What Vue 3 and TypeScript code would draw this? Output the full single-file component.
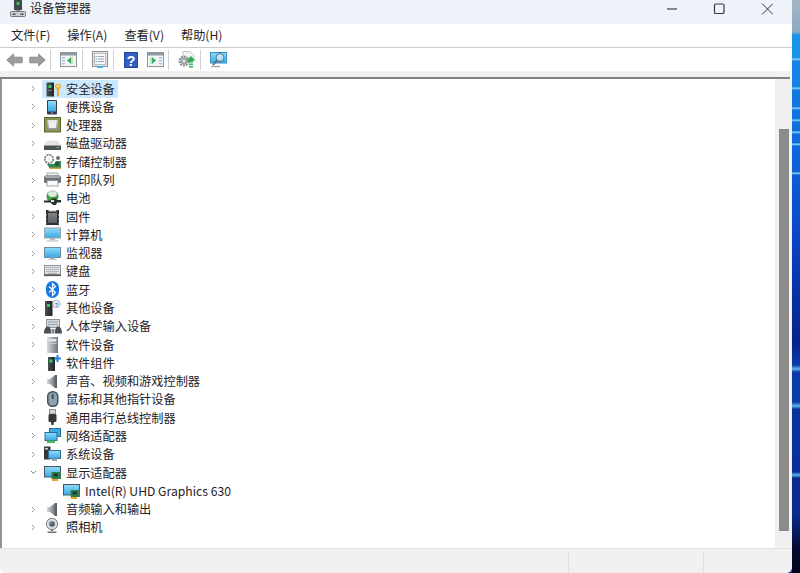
<script setup lang="ts">
type Node = { label: string; icon: string; open?: boolean; selected?: boolean; child?: boolean };
const nodes: Node[] = [
  { label: '安全设备', icon: 'security', selected: true },
  { label: '便携设备', icon: 'portable' },
  { label: '处理器', icon: 'cpu' },
  { label: '磁盘驱动器', icon: 'disk' },
  { label: '存储控制器', icon: 'storage' },
  { label: '打印队列', icon: 'printer' },
  { label: '电池', icon: 'battery' },
  { label: '固件', icon: 'firmware' },
  { label: '计算机', icon: 'computer' },
  { label: '监视器', icon: 'monitor' },
  { label: '键盘', icon: 'keyboard' },
  { label: '蓝牙', icon: 'bluetooth' },
  { label: '其他设备', icon: 'other' },
  { label: '人体学输入设备', icon: 'hid' },
  { label: '软件设备', icon: 'softdev' },
  { label: '软件组件', icon: 'softcomp' },
  { label: '声音、视频和游戏控制器', icon: 'sound' },
  { label: '鼠标和其他指针设备', icon: 'mouse' },
  { label: '通用串行总线控制器', icon: 'usb' },
  { label: '网络适配器', icon: 'network' },
  { label: '系统设备', icon: 'system' },
  { label: '显示适配器', icon: 'display', open: true },
  { label: 'Intel(R) UHD Graphics 630', icon: 'display', child: true },
  { label: '音频输入和输出', icon: 'sound' },
  { label: '照相机', icon: 'camera' },
];
const menus = ['文件(F)', '操作(A)', '查看(V)', '帮助(H)'];
</script>

<template>
  <div class="desktop">
    <svg class="defs" width="0" height="0">
      <defs>
        <linearGradient id="gScreen" x1="0" y1="0" x2="0" y2="1"><stop offset="0" stop-color="#8fdcf8" /><stop offset="1" stop-color="#3aa8e6" /></linearGradient>
        <linearGradient id="gSilver" x1="0" y1="0" x2="0" y2="1"><stop offset="0" stop-color="#e8eaec" /><stop offset="1" stop-color="#8f959a" /></linearGradient>
        <linearGradient id="gTower" x1="0" y1="0" x2="1" y2="0"><stop offset="0" stop-color="#4b5156" /><stop offset="1" stop-color="#1f2427" /></linearGradient>
        <linearGradient id="gSpeaker" x1="0" y1="0" x2="1" y2="0"><stop offset="0" stop-color="#d8dbde" /><stop offset="1" stop-color="#6e7478" /></linearGradient>
      </defs>
    </svg>
    <div class="window">
      <header class="titlebar">
        <svg class="app-icon" width="16" height="17" viewBox="0 0 16 17">
          <rect x="4" y="0" width="8" height="10" fill="#43484c" />
          <rect x="6.500" y="2" width="3" height="3" fill="#35c765" />
          <rect x="5.500" y="10" width="5" height="2" fill="#8d9296" />
          <rect x="0.500" y="11.500" width="15" height="5" rx="1" fill="#c9cdd0" stroke="#777c80" />
          <rect x="2.500" y="13.500" width="3" height="1.500" fill="#4b5054" />
          <rect x="10.500" y="13.500" width="3" height="1.500" fill="#4b5054" />
        </svg>
        <span class="title">设备管理器</span>
        <div class="controls">
          <svg width="12" height="12" viewBox="0 0 12 12"><path d="M2 6h10.500" stroke="#3a3f45" stroke-width="1.200" /></svg>
          <svg width="12" height="12" viewBox="0 0 12 12"><rect x="1.500" y="1" width="9.500" height="9.500" rx="1.300" fill="none" stroke="#33383d" stroke-width="1.200" /></svg>
          <svg width="12" height="12" viewBox="0 0 12 12"><path d="M1 .5l11 11M12 .5l-11 11" stroke="#33383d" stroke-width="1" /></svg>
        </div>
      </header>

      <nav class="menubar">
        <span v-for="m in menus" :key="m" class="menu">{{ m }}</span>
      </nav>

      <div class="toolbar">
        <svg class="tb back" width="17" height="14" viewBox="0 0 17 14"><path d="M.8 7L7.500 1v3.200h8.700v5.600H7.500V13z" fill="#9b9d9f" stroke="#7d7f81" stroke-width=".8" /></svg>
        <svg class="tb fwd" width="17" height="14" viewBox="0 0 17 14"><path d="M16.200 7L9.500 1v3.200H.8v5.600h8.700V13z" fill="#9b9d9f" stroke="#7d7f81" stroke-width=".8" /></svg>
        <i class="sep s1"></i>
        <svg class="tb panel-a" width="17" height="15" viewBox="0 0 17 15"><rect x=".5" y=".5" width="16" height="14" fill="#f4f5f6" stroke="#8e959b" /><rect x="1" y="1" width="15" height="2.500" fill="#8f9aa3" /><rect x="2" y="5" width="3" height="1.500" fill="#a9c3d6" /><rect x="2" y="8" width="3" height="1.500" fill="#a9c3d6" /><rect x="2" y="11" width="3" height="1.500" fill="#a9c3d6" /><path d="M11 5v7l-4-3.500z" fill="#37ad5e" /><rect x="11" y="5" width="2" height="7" fill="#bfe3c9" /></svg>
        <i class="sep s2"></i>
        <svg class="tb doc" width="16" height="17" viewBox="0 0 16 17"><rect x=".5" y=".5" width="15" height="15" fill="#dfe2e5" stroke="#8a9197" /><rect x="2.500" y="2.500" width="11" height="11" fill="#f8f9fa" stroke="#b8bdc1" /><path d="M6 5.500h6M6 8h6M6 10.500h6" stroke="#98a0a8" /><path d="M3.500 5.500h1.500M3.500 8h1.500M3.500 10.500h1.500" stroke="#59b5de" /><rect x="5" y="15" width="6" height="2" fill="#3fb5e8" /></svg>
        <i class="sep s3"></i>
        <svg class="tb help" width="14" height="16" viewBox="0 0 14 16"><rect width="14" height="16" fill="#23479f" /><rect x="1" y="1" width="12" height="14" fill="#3160c4" /><text x="7" y="13.500" text-anchor="middle" class="q">?</text></svg>
        <svg class="tb panel-b" width="17" height="15" viewBox="0 0 17 15"><rect x=".5" y=".5" width="16" height="14" fill="#f4f5f6" stroke="#8e959b" /><rect x="1" y="1" width="15" height="2.500" fill="#8f9aa3" /><rect x="12" y="5" width="3" height="1.500" fill="#a9c3d6" /><rect x="12" y="8" width="3" height="1.500" fill="#a9c3d6" /><rect x="12" y="11" width="3" height="1.500" fill="#a9c3d6" /><path d="M5 5v7l4-3.500z" fill="#37ad5e" /><rect x="3" y="5" width="2" height="7" fill="#bfe3c9" /></svg>
        <i class="sep s4"></i>
        <svg class="tb gear" width="18" height="17" viewBox="0 0 18 17"><path d="M5 .5h7l4 4V9H5z" fill="#f3f4f5" stroke="#c3c6c9" /><circle cx="6" cy="10" r="4.300" fill="none" stroke="#8d9297" stroke-width="2.400" stroke-dasharray="2 .8" /><circle cx="6" cy="10" r="3.300" fill="#a3a7ab" /><circle cx="6" cy="10" r="1.300" fill="#eee" /><path d="M13 5l4.500 4.500h-2.500v2h-4v-2H8.500z" fill="#2db04f" /><path d="M11 12.500h4V14h-4zM11 15h4v1.500h-4z" fill="#2db04f" /></svg>
        <i class="sep s5"></i>
        <svg class="tb scan" width="17" height="16" viewBox="0 0 17 16"><rect x=".5" y=".5" width="16" height="10.500" fill="url(#gScreen)" stroke="#3a8fc2" /><circle cx="10" cy="5.500" r="4" fill="#e4f4fb" fill-opacity=".65" stroke="#52707f" /><path d="M7 8.500l-4 4.500" stroke="#586a74" stroke-width="1.600" /><path d="M1 14.500h9" stroke="#9aa8b1" stroke-width="1.400" /></svg>
      </div>
      <div class="strip"></div>

      <div class="content">
        <div class="tree">
          <div v-for="n in nodes" :key="n.label" class="row" :class="{ child: n.child }">
            <svg v-if="!n.child" class="chev" width="7" height="7" viewBox="0 0 7 7">
              <path v-if="n.open" d="M1 2l2.500 2.500L6 2" fill="none" stroke="#777" />
              <path v-else d="M2 1l2.500 2.500L2 6" fill="none" stroke="#999" />
            </svg>
            <span class="item" :class="{ selected: n.selected }">
              <svg class="ico" width="18" height="18" viewBox="0 0 18 18">
                <template v-if="n.icon === 'security'">
                  <rect x="2.500" y="2.500" width="7.500" height="14" fill="url(#gTower)" /><rect x="4.500" y="5" width="3" height="3" fill="#2fd05a" /><rect x="4" y="10" width="4" height="1" fill="#777" /><circle cx="14" cy="6.500" r="3" fill="#e8b640" /><circle cx="14" cy="6" r="1" fill="#fff2c4" /><path d="M13 9h2v6.500l-1 1-1-1z" fill="#e0a92f" />
                </template>
                <template v-else-if="n.icon === 'portable'">
                  <rect x="3" y="2" width="10" height="14.500" rx="1" fill="#33404c" /><rect x="4" y="3" width="8" height="10.500" fill="url(#gScreen)" /><rect x="7" y="14.500" width="2" height="1" fill="#9aa5ad" />
                </template>
                <template v-else-if="n.icon === 'cpu'">
                  <rect x="0" y="1" width="17" height="15.500" fill="#55682f" /><rect x="1" y="2" width="15" height="13.500" fill="#8c9455" /><rect x="3.500" y="4" width="10" height="9.500" fill="url(#gSilver)" /><rect x="5" y="5.500" width="7" height="6.500" fill="#f0f1ee" />
                </template>
                <template v-else-if="n.icon === 'disk'">
                  <path d="M3 6.500h11l3 4.500v5H0v-5z" fill="#e2e4e6" /><rect x="0" y="11.500" width="17" height="4.500" rx=".5" fill="#4c5154" /><rect x="12.500" y="13" width="2.500" height="1.200" fill="#35c765" />
                </template>
                <template v-else-if="n.icon === 'storage'">
                  <circle cx="5" cy="6" r="4.200" fill="none" stroke="#8a8f93" stroke-width="2" stroke-dasharray="2 .8" /><circle cx="5" cy="6" r="1.400" fill="#e8eaec" /><path d="M3 11h7l2-3h5v8H6z" fill="#2f8a57" /><rect x="6" y="14.500" width="11" height="1.500" fill="#caa33a" /><circle cx="13" cy="11" r="2" fill="#344a3c" /><circle cx="14" cy="5" r="2" fill="#6c7276" />
                </template>
                <template v-else-if="n.icon === 'printer'">
                  <rect x="3" y="2" width="11" height="3" fill="#eef0f1" stroke="#8a8f93" stroke-width=".7" /><rect x="0" y="4.500" width="17" height="7.500" rx="1.500" fill="#6e7479" /><rect x="1" y="5" width="15" height="2" fill="#a4a9ad" /><rect x="3" y="9.500" width="11" height="5.500" fill="#fbfbfb" stroke="#7a7f83" stroke-width=".7" />
                </template>
                <template v-else-if="n.icon === 'battery'">
                  <circle cx="8.500" cy="7.500" r="6" fill="#3f9e3f" /><ellipse cx="8.500" cy="5" rx="4.500" ry="3" fill="#dcebdc" /><path d="M0 11.500h6l2.500-2h3.500l1 1.500h4v2.500h-4l-1 2.500H9l-2.500-2.500H0z" fill="#2a2f32" /><rect x="7" y="11" width="3" height="2" fill="#e4e6e8" />
                </template>
                <template v-else-if="n.icon === 'firmware'">
                  <rect x="2" y="2" width="13" height="15" fill="#2c3033" /><rect x="4.500" y="2" width="8" height="1.500" fill="#d6d8da" /><rect x="4" y="5" width="9" height="10" fill="url(#gSilver)" opacity=".45" /><path d="M2 6v2M2 10v2M2 14v2M15 6v2M15 10v2M15 14v2" stroke="#fff" stroke-width=".6" />
                </template>
                <template v-else-if="n.icon === 'computer'">
                  <rect x=".5" y="2" width="16" height="10" fill="url(#gScreen)" stroke="#9aa6ad" /><rect x="6" y="12" width="5" height="2" fill="#b5bcc1" /><rect x="2.500" y="14" width="12" height="1.700" fill="#d2d6d9" />
                </template>
                <template v-else-if="n.icon === 'monitor'">
                  <rect x=".5" y="3.500" width="16" height="10" fill="url(#gScreen)" stroke="#6f8b9c" /><rect x="6" y="13.500" width="5" height="1.500" fill="#a8b0b5" /><rect x="4" y="15" width="9" height="1" fill="#c6cbcf" />
                </template>
                <template v-else-if="n.icon === 'keyboard'">
                  <rect x=".5" y="3.500" width="16" height="9" fill="#dfe1e3" stroke="#90959a" /><path d="M2 5.500h13M2 7.500h13M2 9.500h13" stroke="#a9adb1" stroke-dasharray="1.400 .5" /><path d="M4 11.300h9" stroke="#a9adb1" /><rect x="0" y="12.500" width="17" height="1.600" fill="#55595d" />
                </template>
                <template v-else-if="n.icon === 'bluetooth'">
                  <rect x="2" y="0" width="13" height="17" rx="6.500" fill="#1677e6" /><path d="M5 5.500l6.500 6L8.500 14.500V2.500l3 3-6.500 6" fill="none" stroke="#fff" stroke-width="1.200" />
                </template>
                <template v-else-if="n.icon === 'other'">
                  <rect x="1" y="2" width="7.500" height="15" fill="url(#gTower)" /><rect x="3" y="5" width="3" height="3" fill="#2fd05a" /><circle cx="12.500" cy="5" r="3.700" fill="#eef3f8" stroke="#9fb6cb" /><text x="12.500" y="7.500" text-anchor="middle" class="tiny">?</text>
                </template>
                <template v-else-if="n.icon === 'hid'">
                  <rect x="2.500" y="2.500" width="13" height="8" fill="#d0d6db" stroke="#8a949c" /><path d="M4 5h10M4 7.500h10" stroke="#8a949c" stroke-dasharray="1.400 .5" /><path d="M0 16.500c0-5 2-7 4-7s3 2 3 7zM11 16.500c0-5 1-7 3-7s4 2 4 7z" fill="#474e54" /><rect x="7.500" y="12" width="3" height="4.500" fill="#7e868c" />
                </template>
                <template v-else-if="n.icon === 'softdev'">
                  <rect x="3" y="1" width="11" height="16" fill="url(#gSpeaker)" /><rect x="4.500" y="3" width="8" height="2.500" fill="#e3e6e8" /><rect x="4.500" y="7" width="8" height="1" fill="#c5cacd" />
                </template>
                <template v-else-if="n.icon === 'softcomp'">
                  <rect x="4" y="3" width="7" height="14" fill="url(#gTower)" /><rect x="5.500" y="5.500" width="3" height="3" fill="#2fd05a" /><path d="M12.500 1h2v2.500H17v2h-2.500V8h-2V5.500H10.500v-2h2z" fill="#1f83d8" />
                </template>
                <template v-else-if="n.icon === 'sound'">
                  <path d="M3 7h3l5-4v13l-5-4H3z" fill="url(#gSpeaker)" /><rect x="11" y="3" width="2" height="13" fill="#5e6367" />
                </template>
                <template v-else-if="n.icon === 'mouse'">
                  <rect x="3" y="1" width="11.500" height="16" rx="5.500" fill="#434d54" /><rect x="4.500" y="2.500" width="8.500" height="13" rx="4" fill="#8ca3b4" /><rect x="7.800" y="4" width="1.800" height="5" rx=".9" fill="#39434a" />
                </template>
                <template v-else-if="n.icon === 'usb'">
                  <rect x="5.500" y="0.500" width="6" height="4.500" fill="#d4d7da" stroke="#8a8f94" /><rect x="4.500" y="5" width="8" height="8" rx="1.500" fill="#35393d" /><path d="M7 13h3l-.5 3h-2z" fill="#35393d" />
                </template>
                <template v-else-if="n.icon === 'network'">
                  <rect x="5.500" y="1.500" width="11" height="8" fill="#3da9e4" stroke="#2a6f99" /><rect x="1" y="5.500" width="12" height="8" fill="url(#gScreen)" stroke="#2a6f99" /><rect x="3" y="13.500" width="8" height="2.500" fill="#3fbf5e" />
                </template>
                <template v-else-if="n.icon === 'system'">
                  <rect x="0" y="1.500" width="6.500" height="13" fill="#333a3f" /><rect x="1" y="3" width="3" height="1.500" fill="#cfd3d6" /><rect x="4.500" y="5.500" width="12" height="8" fill="url(#gScreen)" stroke="#2f6f98" /><rect x="8" y="13.500" width="5" height="2.500" fill="#9aa3a9" />
                </template>
                <template v-else-if="n.icon === 'display'">
                  <rect x=".5" y="2.500" width="16" height="10.500" fill="url(#gScreen)" stroke="#465660" /><rect x="7.500" y="8" width="9.500" height="7" fill="#2f7d50" /><rect x="9.500" y="9.500" width="4.500" height="3" fill="#1f3f2d" /><rect x="8" y="15" width="6" height="2" fill="#e9a21f" />
                </template>
                <template v-else>
                  <circle cx="8" cy="6" r="5.700" fill="#dadcde" stroke="#7b8084" /><circle cx="8" cy="6" r="2.800" fill="#4f5c66" /><circle cx="7.300" cy="5.300" r=".8" fill="#b7c4cd" /><path d="M7 11.500h2V13H7zM3.500 13.500h9V15h-9z" fill="#6d7276" />
                </template>
              </svg>
              <span class="label">{{ n.label }}</span>
            </span>
          </div>
        </div>
        <div class="scrollbar"><div class="thumb"></div></div>
      </div>

      <footer class="statusbar">
        <i class="cell c1"></i>
        <i class="cell c2"></i>
      </footer>
    </div>
    <div class="wallpaper"></div>
  </div>
</template>

<style>
html, body { margin: 0; padding: 0; background: #0b3fb0; overflow: hidden; }
</style>

<style scoped>
.desktop {
  width: 800px;
  height: 573px;
  overflow: hidden;
  display: flex;
  font-family: "Noto Sans CJK SC", "Liberation Sans", sans-serif;
  color: #1f2226;
  background: #0b3fb0;
}
.defs { position: absolute; }
.wallpaper {
  flex: none;
  width: 8px;
  height: 573px;
  background: linear-gradient(180deg,
    #a3b6c6 0, #8ea9c2 32px, #1a94ea 35px,
    #1a94ea 58px, #8fdcf6 59px, #1684e6 61px,
    #1280e4 87px, #8fdcf6 88px, #1078e2 90px,
    #0f76e2 107px, #8fdcf6 108px, #0f74e0 110px,
    #0f72e0 119px, #8fdcf6 120px, #0f70e0 122px,
    #0e6ede 131px, #8fdcf6 132px, #0e6cde 134px,
    #0e6adc 143px, #8fdcf6 144px, #0d68dc 146px,
    #0d60d8 172px, #8fdcf6 173px, #0c5cd6 175px,
    #0a44c4 240px, #06228c 340px, #0a3aac 365px,
    #5fb4ea 369px, #0a3aac 372px, #0a3aac 402px,
    #5fb4ea 406px, #0a329f 409px, #0a2f9c 472px,
    #5fb4ea 475px, #0a2a90 478px, #0a2a90 515px,
    #050a30 548px, #03051a 573px);
}
.window {
  width: 792px;
  height: 573px;
  flex: none;
  display: flex;
  flex-direction: column;
  background: #fff;
  border-bottom-right-radius: 6px;
  overflow: hidden;
}
.titlebar {
  height: 24px;
  flex: none;
  background: #eef3f9;
  display: flex;
  align-items: flex-start;
  padding-left: 10px;
}
.title { font-size: 12.2px; line-height: 17px; margin-left: 4px; }
.controls { margin-left: auto; margin-right: 19px; margin-top: 3px; display: flex; gap: 36px; }
.menubar {
  height: 23px;
  flex: none;
  display: flex;
  align-items: center;
  padding-left: 11px;
  gap: 17px;
  font-size: 12.2px;
  border-bottom: 1px solid #c9cbcd;
}
.menu { line-height: 17px; }
.toolbar {
  height: 23px;
  flex: none;
  display: flex;
  align-items: center;
  padding-left: 2px;
  background: #fff;
}
.back { margin-left: 4px; }
.fwd { margin-left: 6px; }
.sep { flex: none; width: 1px; height: 20px; background: #cfd2d5; }
.s1 { margin-left: 4px; }
.panel-a { margin-left: 9px; }
.s2 { margin-left: 5px; }
.doc { margin-left: 9px; }
.s3 { margin-left: 5px; }
.help { margin-left: 10px; }
.panel-b { margin-left: 9px; }
.s4 { margin-left: 4px; }
.gear { margin-left: 9px; }
.s5 { margin-left: 4px; }
.scan { margin-left: 9px; }
.strip {
  height: 6px;
  flex: none;
  background: #f0f0f0;
  border-bottom: 2px solid #7f8285;
  margin-right: 2px;
}
.content { flex: 1; min-height: 0; display: flex; border-left: 2px solid #8d949b; }
.tree { flex: 1; padding-top: .5px; }
.row {
  height: 18.29px;
  display: flex;
  align-items: center;
  padding-left: 28px;
}
.chev { flex: none; margin-right: 5px; }
.row.child { padding-left: 59px; }
.item {
  display: flex;
  align-items: center;
  height: 18px;
  padding-right: 3px;
  padding-left: 2px;
}
.item.selected { background: #cce8ff; }
.ico { flex: none; margin-right: 4px; }
.label { font-size: 12.2px; line-height: 18px; white-space: nowrap; }
.scrollbar {
  width: 17px;
  flex: none;
  background: #f0f0f0;
  padding: 50px 3px 17px 4px;
  box-sizing: border-box;
}
.thumb { width: 10px; height: 402px; background: #8b8b8b; }
.statusbar {
  height: 25px;
  flex: none;
  box-sizing: border-box;
  background: #f0f0f0;
  border-top: 1px solid #e3e3e3;
  border-bottom-left-radius: 6px;
  display: flex;
  padding-left: 568px;
}
.cell { width: 1px; background: #e2e2e2; margin-top: 3px; }
.c2 { margin-left: 134px; }
.q { font: bold 14px "Liberation Sans", sans-serif; fill: #fff; }
.tiny { font: bold 6px "Liberation Sans", sans-serif; fill: #2a6fb0; }
</style>
